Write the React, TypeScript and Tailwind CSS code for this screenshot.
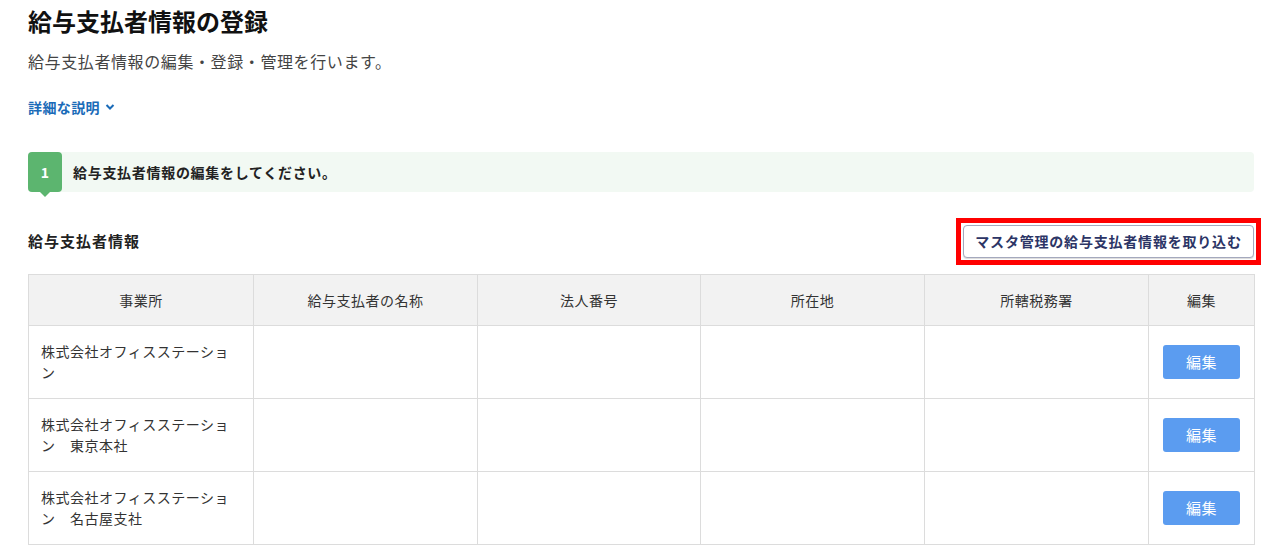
import React from "react";

const font = { fontFamily: '"Noto Sans CJK JP", "Noto Sans", sans-serif' };

const rows = [
  ["株式会社オフィスステーション"],
  ["株式会社オフィスステーション　東京本社"],
  ["株式会社オフィスステーション　名古屋支社"],
];

export default function App() {
  return (
    <div className="bg-white w-[1280px] h-[557px] overflow-hidden" style={font}>
      <div className="pl-[28px] pr-[26px] pt-[5px] text-[#333]">
        <h1 className="text-[24px] leading-[32px] font-bold text-[#111]">給与支払者情報の登録</h1>
        <p className="mt-[12px] text-[16px] leading-[24px] tracking-[0.6px] text-[#444]">
          給与支払者情報の編集・登録・管理を行います。
        </p>
        <div className="mt-[24px] flex items-center h-[20px] text-[14px] font-bold text-[#1a6bb8] tracking-[0.4px]">
          <span>詳細な説明</span>
          <svg className="ml-[5px]" width="10" height="8" viewBox="0 0 10 8">
            <path d="M1.5 2 L5 5.5 L8.5 2" stroke="#1a6bb8" strokeWidth="2" fill="none" />
          </svg>
        </div>

        <div className="mt-[35px] flex items-center h-[40px] bg-[#f2f9f3] rounded-[4px]">
          <div className="relative w-[34px] h-[40px] bg-[#5cb56f] rounded-[4px] flex items-center justify-center text-white font-bold text-[14px]">
            1
            <div className="absolute left-[12px] top-[40px] w-0 h-0 border-l-[5px] border-r-[5px] border-t-[5px] border-l-transparent border-r-transparent border-t-[#5cb56f]" />
          </div>
          <span className="ml-[11px] text-[14px] font-bold tracking-[0.7px] text-[#222]">給与支払者情報の編集をしてください。</span>
        </div>

        <div className="mt-[25px] flex items-center justify-between h-[48px]">
          <h2 className="text-[15px] font-bold tracking-[1px] text-[#222]">給与支払者情報</h2>
          <div className="border-[5px] border-[#ff0000] p-[2px] -mr-[7px]">
            <button className="h-[33px] w-[291px] bg-white border border-[#a4a8bd] rounded-[4px] shadow-[0_1px_1px_rgba(0,0,0,0.15)] text-[14px] font-bold tracking-[0.8px] text-[#2c3566]">
              マスタ管理の給与支払者情報を取り込む
            </button>
          </div>
        </div>

        <table className="mt-[9px] w-[1226px] border-collapse table-fixed text-[14px] tracking-[0.5px] text-[#333]">
          <colgroup>
            <col className="w-[225px]" />
            <col className="w-[224px]" />
            <col className="w-[223px]" />
            <col className="w-[224px]" />
            <col className="w-[224px]" />
            <col className="w-[106px]" />
          </colgroup>
          <thead>
            <tr className="h-[51px] bg-[#f2f2f2]">
              {["事業所", "給与支払者の名称", "法人番号", "所在地", "所轄税務署", "編集"].map((h) => (
                <th key={h} className="border border-[#dcdcdc] font-normal text-center">
                  {h}
                </th>
              ))}
            </tr>
          </thead>
          <tbody>
            {rows.map((r, i) => (
              <tr key={i} className="h-[73px]">
                <td className="border border-[#dcdcdc] px-[12px] leading-[21px] align-middle">{r[0]}</td>
                <td className="border border-[#dcdcdc]" />
                <td className="border border-[#dcdcdc]" />
                <td className="border border-[#dcdcdc]" />
                <td className="border border-[#dcdcdc]" />
                <td className="border border-[#dcdcdc] text-center align-middle">
                  <button className="w-[77px] h-[34px] bg-[#5b9cf0] rounded-[3px] text-white text-[15px]">編集</button>
                </td>
              </tr>
            ))}
          </tbody>
        </table>
      </div>
    </div>
  );
}
